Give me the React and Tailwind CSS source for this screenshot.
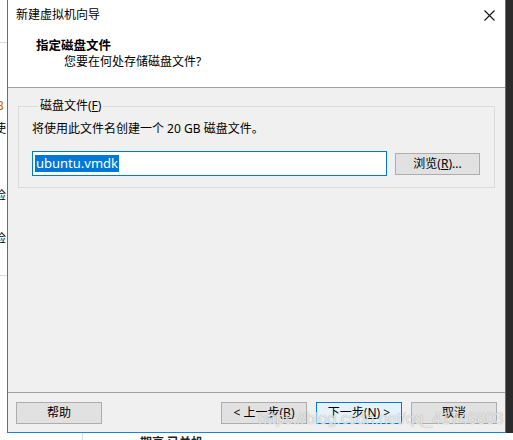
import React from 'react';

const font = { fontFamily: '"Noto Sans", "Noto Sans CJK SC", sans-serif' };

function Btn({ children, primary }) {
  return (
    <div
      className={
        'w-[86px] h-[22px] flex items-center justify-center text-[12px] leading-none text-[#000] border ' +
        (primary ? 'bg-[#e5f1fb] border-[#0078d7]' : 'bg-[#e1e1e1] border-[#adadad]')
      }
    >
      {children}
    </div>
  );
}

// cut-off bits of the window behind, on the left edge
function LeftStrip() {
  return (
    <div className="w-[7px] h-full bg-white overflow-hidden flex flex-col text-[12px] leading-[14px]">
      <div className="h-[43px] shrink-0 border-b border-[#d9d9d9]" />
      <div className="h-[56px] shrink-0" />
      <div className="-ml-[4px] text-[#c86400] shrink-0">B</div>
      <div className="h-[9px] shrink-0" />
      <div className="-ml-[6px] shrink-0">使</div>
      <div className="h-[53px] shrink-0" />
      <div className="-ml-[6px] shrink-0">检</div>
      <div className="h-[29px] shrink-0" />
      <div className="-ml-[6px] shrink-0">检</div>
      <div className="h-[30px] shrink-0 border-b border-[#d9d9d9]" />
    </div>
  );
}

export default function App() {
  return (
    <div className="w-[513px] h-[440px] bg-white overflow-hidden relative flex flex-col" style={font}>
      <div className="flex h-[433px] shrink-0">
        <LeftStrip />

        {/* wizard window */}
        <div className="w-[499px] h-full flex flex-col border-x border-b border-[#1883d7] bg-white">
          {/* title bar */}
          <div className="h-[30px] shrink-0 flex items-center justify-between pl-[8px] pr-[10px]">
            <span className="text-[12px] leading-none text-[#000]">新建虚拟机向导</span>
            <svg width="11" height="11" viewBox="0 0 11 11">
              <path d="M0.5 0.5 L10.5 10.5 M10.5 0.5 L0.5 10.5" stroke="#111" strokeWidth="1.1" />
            </svg>
          </div>

          {/* header */}
          <div className="h-[58px] shrink-0 border-b border-[#a0a0a0] pt-[8px] flex flex-col">
            <div className="pl-[28px] text-[12.5px] leading-[16px] font-bold text-[#000]">指定磁盘文件</div>
            <div className="pl-[56px] text-[12px] leading-[16px] text-[#000]">您要在何处存储磁盘文件?</div>
          </div>

          {/* body */}
          <div className="flex-1 bg-[#f0f0f0] pt-[11px] pl-[10px] pr-[11px]">
            <fieldset className="border border-[#dcdcdc] pl-[13px] pr-[14px] pb-[11px]">
              <legend className="ml-[6px] px-[2px] text-[12px] leading-[14px] text-[#000]">
                磁盘文件(<span className="underline">F</span>)
              </legend>
              <div className="pt-[8px] text-[12px] leading-[16px] text-[#000]">
                将使用此文件名创建一个 20 GB 磁盘文件。
              </div>
              <div className="mt-[14px] flex items-center gap-[8px]">
                <div className="w-[355px] h-[25px] bg-white border border-[#0078d7] flex items-center pl-[2px]">
                  <span className="bg-[#0078d7] text-white text-[13px] leading-[17px] px-[1px]">ubuntu.vmdk</span>
                </div>
                <div className="w-[85px] h-[22px] bg-[#e1e1e1] border border-[#adadad] flex items-center justify-center text-[12px] leading-none text-[#000]">
                  浏览(<span className="underline">R</span>)...
                </div>
              </div>
            </fieldset>
          </div>

          {/* footer */}
          <div className="h-[40px] shrink-0 bg-[#f0f0f0] border-t border-[#a0a0a0] pt-[9px] pl-[8px] pr-[8px] flex items-start">
            <Btn>帮助</Btn>
            <div className="flex-1" />
            <div className="flex gap-[9px]">
              <Btn>&lt; 上一步(<span className="underline">B</span>)</Btn>
              <Btn primary>下一步(<span className="underline">N</span>) &gt;</Btn>
              <Btn>取消</Btn>
            </div>
          </div>
        </div>

        <div className="w-[7px] h-full bg-[#2b2b2b]" />
      </div>

      {/* strip below the window */}
      <div className="flex-1 flex overflow-hidden">
        <div className="w-[82px] shrink-0" />
        <div className="w-px bg-[#cfe3f5]" />
        <div className="pl-[57px] mt-[3px] text-[12px] leading-[14px] font-bold text-[#222]">期高 已关机</div>
      </div>

      {/* watermark */}
      <div
        className="absolute left-[258px] top-[410px] text-[16px] leading-[18px] text-white/75 whitespace-nowrap"
        style={{ fontFamily: '"Liberation Sans", sans-serif', textShadow: '0 0 1px rgba(110,110,110,0.7)' }}
      >
        https://blog.csdn.net/qq_41746803
      </div>
    </div>
  );
}
